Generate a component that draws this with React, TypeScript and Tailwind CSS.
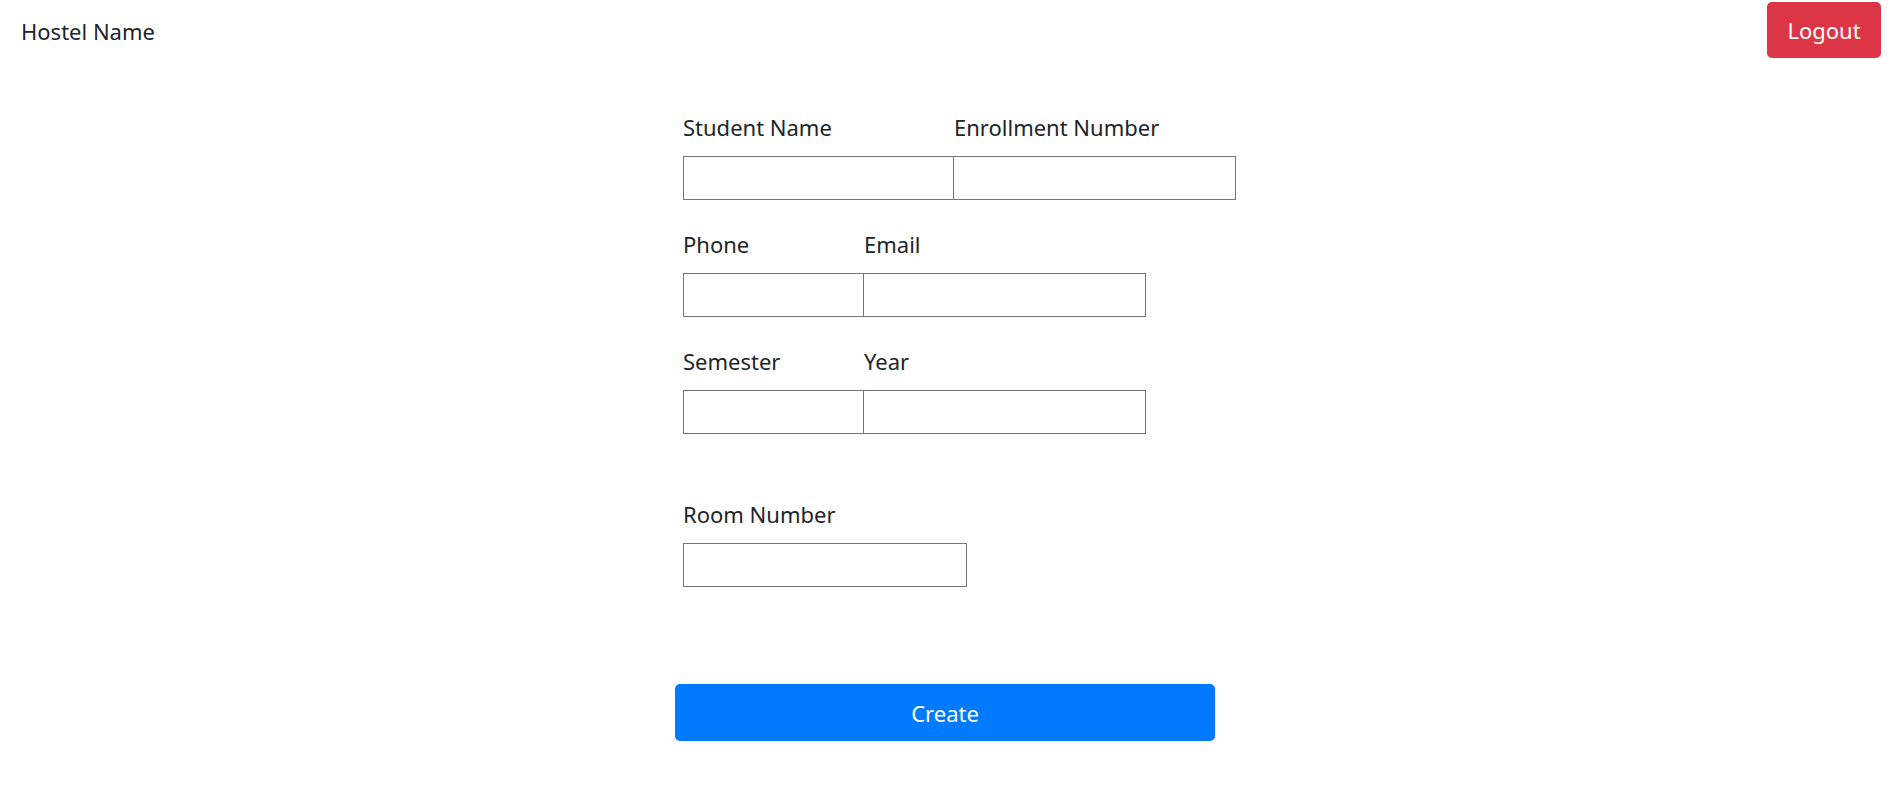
import React from "react";

const font = { fontFamily: '"Noto Sans", "Open Sans", sans-serif' };

function Field({ label, w, first }: { label: string; w: string; first?: boolean }) {
  return (
    <div className={`flex flex-col shrink-0 ${w}`}>
      <div className="h-[30px] leading-[30px] text-[22px] text-[#212529] whitespace-nowrap">{label}</div>
      <div
        className={`mt-[14px] h-[44px] bg-white border border-[#767676] ${first ? "" : "border-l-0"}`}
      />
    </div>
  );
}

export default function App() {
  return (
    <div className="min-h-[791px] w-full bg-white text-[#212529]" style={font}>
      <header className="flex justify-between items-start">
        <div className="ml-[21px] mt-[16px] h-[30px] leading-[30px] text-[22px] text-[#212529]">
          Hostel Name
        </div>
        <button className="mt-[2px] mr-[15px] h-[56px] w-[114px] rounded-[5px] bg-[#dc3545] text-white text-[22px] leading-[30px] flex items-center justify-center">
          Logout
        </button>
      </header>

      <main className="ml-[675px] flex flex-col items-start">
        <div className="pl-[8px] mt-[54px] flex flex-col">
          <div className="flex">
            <Field label="Student Name" w="w-[271px]" first />
            <Field label="Enrollment Number" w="w-[282px]" />
          </div>
          <div className="flex mt-[29px]">
            <Field label="Phone" w="w-[181px]" first />
            <Field label="Email" w="w-[282px]" />
          </div>
          <div className="flex mt-[29px]">
            <Field label="Semester" w="w-[181px]" first />
            <Field label="Year" w="w-[282px]" />
          </div>
          <div className="flex mt-[65px]">
            <Field label="Room Number" w="w-[284px]" first />
          </div>
        </div>
        <button className="mt-[97px] h-[57px] w-[540px] rounded-[5px] bg-[#007bff] text-white text-[22px] leading-[30px] flex items-center justify-center">
          Create
        </button>
      </main>
    </div>
  );
}
